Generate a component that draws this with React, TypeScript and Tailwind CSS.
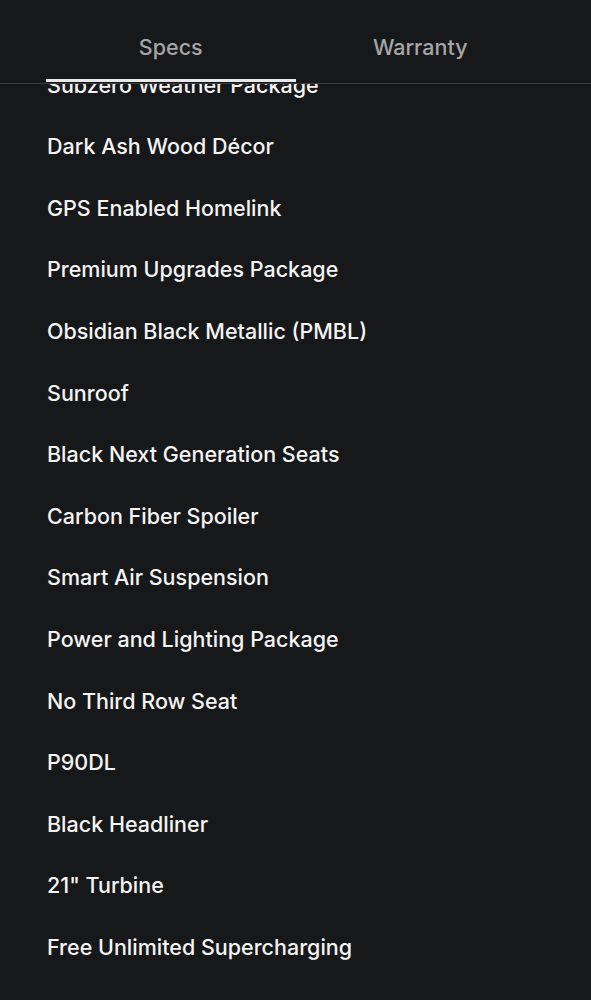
const items = [
  'Subzero Weather Package',
  'Dark Ash Wood Décor',
  'GPS Enabled Homelink',
  'Premium Upgrades Package',
  'Obsidian Black Metallic (PMBL)',
  'Sunroof',
  'Black Next Generation Seats',
  'Carbon Fiber Spoiler',
  'Smart Air Suspension',
  'Power and Lighting Package',
  'No Third Row Seat',
  'P90DL',
  'Black Headliner',
  '21" Turbine',
  'Free Unlimited Supercharging',
];

export default function App() {
  return (
    <div
      className="h-[1000px] overflow-hidden bg-[#17181a] text-white"
      style={{ fontFamily: 'Inter, "Noto Sans", sans-serif' }}
    >
      {/* Tabs */}
      <div className="sticky top-0 z-10 h-[84px] border-b border-[#3a3b3d] bg-[#17181a] px-[46px]">
        <div className="grid h-full grid-cols-2">
          <div className="relative flex items-center justify-center pt-[11px]">
            <span className="text-[21.5px] font-medium text-[#a5a6a8]">Specs</span>
            <div className="absolute bottom-[1px] left-0 h-[3px] w-full bg-[#e8e8e8]" />
          </div>
          <div className="flex items-center justify-center pt-[11px]">
            <span className="text-[21.5px] font-medium text-[#a5a6a8]">Warranty</span>
          </div>
        </div>
      </div>

      {/* Options list */}
      <ul className="-mt-[30px] px-[47px]">
        {items.map((item) => (
          <li key={item} className="flex h-[61.6px] items-center text-[21.5px] font-medium text-[#f4f4f4]">
            {item}
          </li>
        ))}
      </ul>
    </div>
  );
}
